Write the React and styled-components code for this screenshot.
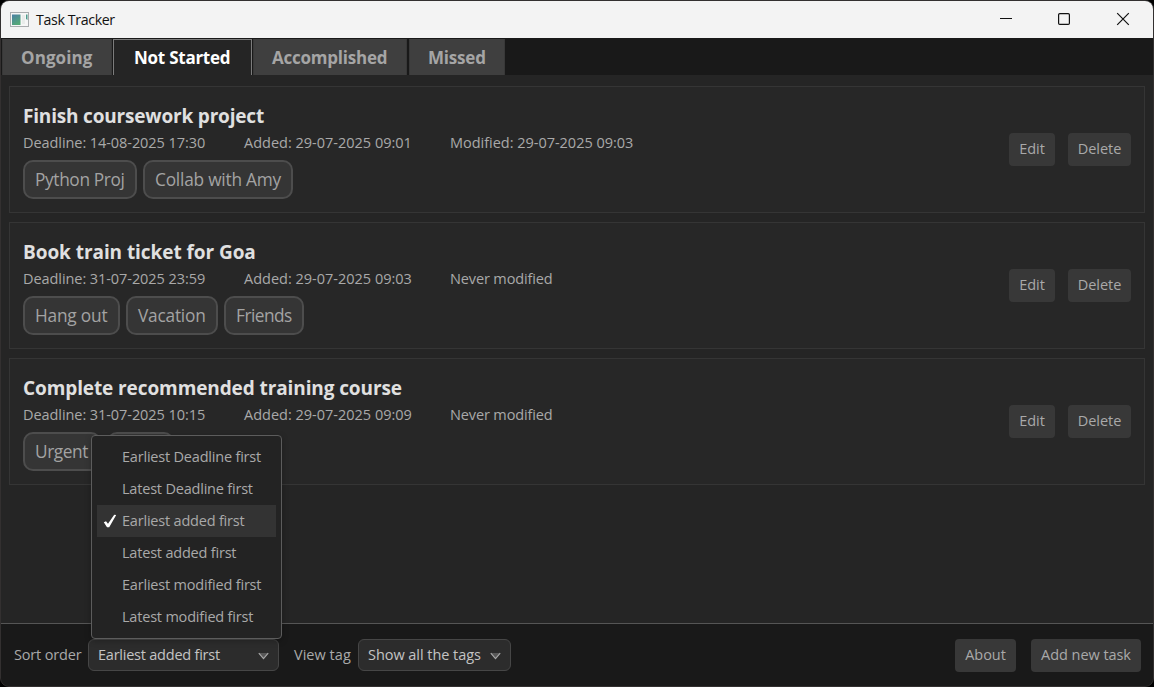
import React from "react";
import styled, { createGlobalStyle } from "styled-components";

const Global = createGlobalStyle`
  * { box-sizing: border-box; }
  html, body { margin: 0; background: #000; }
  body { overflow: hidden; }
`;

const Window = styled.div`
  position: relative;
  width: 1154px;
  height: 687px;
  display: flex;
  flex-direction: column;
  background: #252525;
  border: 1px solid #333030;
  border-radius: 9px;
  overflow: hidden;
  font-family: "Open Sans", "Noto Sans", sans-serif;
  font-size: 14.5px;
  color: #a9a9a9;
  white-space: nowrap;
`;

const TitleBar = styled.header`
  display: flex;
  align-items: center;
  height: 37px;
  padding: 0 23px 0 9px;
  background: #f3f3f3;
  color: #111;
`;

const WindowTitle = styled.span`
  flex: 1;
  margin-left: 7px;
  font-size: 14.2px;
  letter-spacing: -0.36px;
  line-height: 20px;
`;

const WindowControls = styled.div`
  display: flex;
  gap: 45px;
  padding-bottom: 1px;
`;

const ControlIcon = styled.svg`
  display: block;
  width: 14px;
  height: 14px;
  fill: none;
  stroke: #111;
`;

const TabBar = styled.nav`
  display: flex;
  height: 37px;
  padding: 1px 0 0 1px;
  background: #191919;
`;

const Tab = styled.button`
  display: flex;
  align-items: center;
  width: ${(p) => p.$width}px;
  margin: 0 ${(p) => p.$gap}px 0 0;
  padding: 0 0 0 ${(p) => (p.$active ? 20 : 18)}px;
  border: 1px solid ${(p) => (p.$active ? "#7c7c7c" : "#383838")};
  border-top-color: ${(p) => (p.$active ? "#7c7c7c" : "#3f3f3f")};
  border-bottom: 0;
  background: ${(p) => (p.$active ? "#252525" : "#3f3f3f")};
  color: ${(p) => (p.$active ? "#fff" : "#a5a5a5")};
  font: 700 17px/24px "Open Sans", "Noto Sans", sans-serif;
  letter-spacing: ${(p) => p.$track}px;
`;

const TaskList = styled.main`
  flex: 1;
  display: flex;
  flex-direction: column;
  gap: 9px;
  padding: 11px 8px 0;
  background: #252525;
`;

const Card = styled.article`
  display: flex;
  justify-content: space-between;
  align-items: center;
  height: 127px;
  padding: 0 13px;
  border: 1px solid #353535;
  background: #272727;
`;

const CardBody = styled.div`
  align-self: stretch;
  display: flex;
  flex-direction: column;
  padding-top: 16px;
`;

const TaskTitle = styled.h2`
  margin: 0 0 4px;
  font-size: 19px;
  font-weight: 700;
  line-height: 26px;
  letter-spacing: ${(p) => p.$track}px;
  color: #e0e0e0;
`;

const MetaRow = styled.div`
  display: grid;
  grid-template-columns: 221px 206px 200px;
  margin-bottom: 7px;
  line-height: 20px;
`;

const MetaItem = styled.span`
  letter-spacing: ${(p) => p.$track}px;
`;

const TagRow = styled.div`
  display: flex;
  gap: 6px;
`;

const Tag = styled.span`
  width: ${(p) => p.$width}px;
  height: 39px;
  padding-left: 10px;
  border: 2px solid #4d4d4d;
  border-radius: 10px;
  background: #353535;
  color: #a3a3a3;
  font-size: 17.3px;
  line-height: 35px;
  letter-spacing: ${(p) => p.$track}px;
`;

const ButtonRow = styled.div`
  display: flex;
  gap: ${(p) => p.$gap}px;
`;

const Button = styled.button`
  width: ${(p) => p.$width}px;
  height: 33px;
  padding: 0 0 2px;
  border: 0;
  border-radius: 4px;
  background: #383838;
  color: #a9a9a9;
  font: 400 14.5px/20px "Open Sans", "Noto Sans", sans-serif;
  letter-spacing: -0.05px;
`;

const Footer = styled.footer`
  display: flex;
  align-items: flex-start;
  height: 63px;
  padding: 15px 12px 0 13px;
  border-top: 1px solid #555;
  background: #191919;
`;

const FieldLabel = styled.label`
  width: ${(p) => p.$width}px;
  line-height: 31px;
  letter-spacing: ${(p) => p.$track}px;
`;

const Select = styled.button`
  display: flex;
  align-items: center;
  justify-content: space-between;
  width: ${(p) => p.$width}px;
  height: 32px;
  margin-right: 15px;
  padding: 0 9px 1px 9px;
  border: 1px solid #464646;
  border-radius: 6px;
  background: #2c2c2c;
  color: #c4c4c4;
  font: 400 14.5px/20px "Open Sans", "Noto Sans", sans-serif;
  letter-spacing: ${(p) => p.$track}px;
`;

const Arrow = styled.svg`
  display: block;
  width: 11px;
  height: 8px;
  margin-top: 3px;
`;

const Spacer = styled.div`
  flex: 1;
`;

const Menu = styled.ul`
  position: absolute;
  left: 90px;
  top: 434px;
  width: 191px;
  height: 204px;
  margin: 0;
  padding: 5px;
  list-style: none;
  border: 1px solid #5c5c5c;
  border-radius: 4px;
  background: #232323;
  box-shadow: 0 2px 6px rgba(0, 0, 0, 0.25);
`;

const MenuItem = styled.li`
  display: grid;
  grid-template-columns: 25px 1fr;
  align-items: center;
  height: 32px;
  padding-bottom: 1px;
  background: ${(p) => (p.$selected ? "#333" : "transparent")};
  letter-spacing: -0.2px;
`;

const Check = styled.svg`
  display: block;
  width: 14px;
  height: 14px;
  margin: 0 0 0 6px;
  fill: #fff;
`;

const AppIcon = styled.svg`
  display: block;
  width: 19px;
  height: 16px;
`;

const tabs = [
  { label: "Ongoing", width: 110, gap: 1, track: 0.1 },
  { label: "Not Started", width: 139, gap: 1, track: -0.25, active: true },
  { label: "Accomplished", width: 154, gap: 2, track: -0.23 },
  { label: "Missed", width: 96, gap: 0, track: -0.2 },
];

const tasks = [
  {
    title: "Finish coursework project",
    track: -0.18,
    meta: [
      { text: "Deadline: 14-08-2025 17:30", track: -0.07 },
      { text: "Added: 29-07-2025 09:01", track: 0 },
      { text: "Modified: 29-07-2025 09:03", track: -0.02 },
    ],
    tags: [
      { label: "Python Proj", width: 114, track: -0.36 },
      { label: "Collab with Amy", width: 150, track: -0.22 },
    ],
  },
  {
    title: "Book train ticket for Goa",
    track: -0.06,
    meta: [
      { text: "Deadline: 31-07-2025 23:59", track: -0.07 },
      { text: "Added: 29-07-2025 09:03", track: 0 },
      { text: "Never modified", track: -0.13 },
    ],
    tags: [
      { label: "Hang out", width: 97, track: -0.2 },
      { label: "Vacation", width: 92, track: -0.22 },
      { label: "Friends", width: 80, track: -0.52 },
    ],
  },
  {
    title: "Complete recommended training course",
    track: -0.1,
    meta: [
      { text: "Deadline: 31-07-2025 10:15", track: -0.07 },
      { text: "Added: 29-07-2025 09:09", track: 0 },
      { text: "Never modified", track: -0.13 },
    ],
    tags: [
      { label: "Urgent", width: 78, track: -0.42 },
      { label: "", width: 67, track: 0 },
    ],
  },
];

const sortOptions = [
  "Earliest Deadline first",
  "Latest Deadline first",
  "Earliest added first",
  "Latest added first",
  "Earliest modified first",
  "Latest modified first",
];

const selectedSort = "Earliest added first";

function DropArrow() {
  return (
    <Arrow viewBox="0 0 11 8">
      <path d="M0.5 1H10.5L5.5 7Z" fill="#585858" />
      <path d="M0.8 1.2L5.5 6.7L10.2 1.2" fill="none" stroke="#a6a6a6" strokeWidth="1.1" />
    </Arrow>
  );
}

export default function App() {
  return (
    <>
      <Global />
      <Window>
        <TitleBar>
          <AppIcon viewBox="0 0 19 16">
            <defs>
              <linearGradient id="pane" x1="0" y1="0" x2="0.5" y2="1">
                <stop offset="0" stopColor="#4a7fa5" />
                <stop offset="1" stopColor="#55a878" />
              </linearGradient>
            </defs>
            <rect x="0.5" y="0.5" width="18" height="14" fill="#f6f6f6" stroke="#a9acae" />
            <rect x="2" y="2.5" width="8.5" height="10.5" fill="url(#pane)" />
            <rect x="12" y="3" width="3" height="9" fill="#e9ecea" />
            <path d="M16 2.5h1.5V8L16 7Z" fill="#4d9a8c" />
          </AppIcon>
          <WindowTitle>Task Tracker</WindowTitle>
          <WindowControls>
            <ControlIcon viewBox="0 0 14 14">
              <path d="M2 6.5H14" />
            </ControlIcon>
            <ControlIcon viewBox="0 0 14 14">
              <rect x="1.6" y="1.6" width="10.8" height="10.8" rx="1.2" strokeWidth="1.2" />
            </ControlIcon>
            <ControlIcon viewBox="0 0 14 14">
              <path d="M1.2 1.2L12.8 12.8M12.8 1.2L1.2 12.8" strokeWidth="1.2" />
            </ControlIcon>
          </WindowControls>
        </TitleBar>

        <TabBar>
          {tabs.map((t) => (
            <Tab key={t.label} $width={t.width} $gap={t.gap} $track={t.track} $active={t.active}>
              {t.label}
            </Tab>
          ))}
        </TabBar>

        <TaskList>
          {tasks.map((task) => (
            <Card key={task.title}>
              <CardBody>
                <TaskTitle $track={task.track}>{task.title}</TaskTitle>
                <MetaRow>
                  {task.meta.map((m) => (
                    <MetaItem key={m.text} $track={m.track}>{m.text}</MetaItem>
                  ))}
                </MetaRow>
                <TagRow>
                  {task.tags.map((tag) => (
                    <Tag key={tag.label} $width={tag.width} $track={tag.track}>
                      {tag.label}
                    </Tag>
                  ))}
                </TagRow>
              </CardBody>
              <ButtonRow $gap={13}>
                <Button $width={46}>Edit</Button>
                <Button $width={63}>Delete</Button>
              </ButtonRow>
            </Card>
          ))}
        </TaskList>

        <Footer>
          <FieldLabel $width={74} $track={-0.16}>Sort order</FieldLabel>
          <Select $width={191} $track={-0.23}>
            {selectedSort}
            <DropArrow />
          </Select>
          <FieldLabel $width={64} $track={0.03}>View tag</FieldLabel>
          <Select $width={153} $track={-0.05}>
            Show all the tags
            <DropArrow />
          </Select>
          <Spacer />
          <ButtonRow $gap={15}>
            <Button $width={61}>About</Button>
            <Button $width={110}>Add new task</Button>
          </ButtonRow>
        </Footer>

        <Menu>
          {sortOptions.map((option) => (
            <MenuItem key={option} $selected={option === selectedSort}>
              <span>
                {option === selectedSort && (
                  <Check viewBox="0 0 14 14">
                    <path d="M0.8 8.2L3 7.2L5 9.8L11.2 0.8L13.2 1L6.2 13.2L4 13.2Z" />
                  </Check>
                )}
              </span>
              {option}
            </MenuItem>
          ))}
        </Menu>
      </Window>
    </>
  );
}
